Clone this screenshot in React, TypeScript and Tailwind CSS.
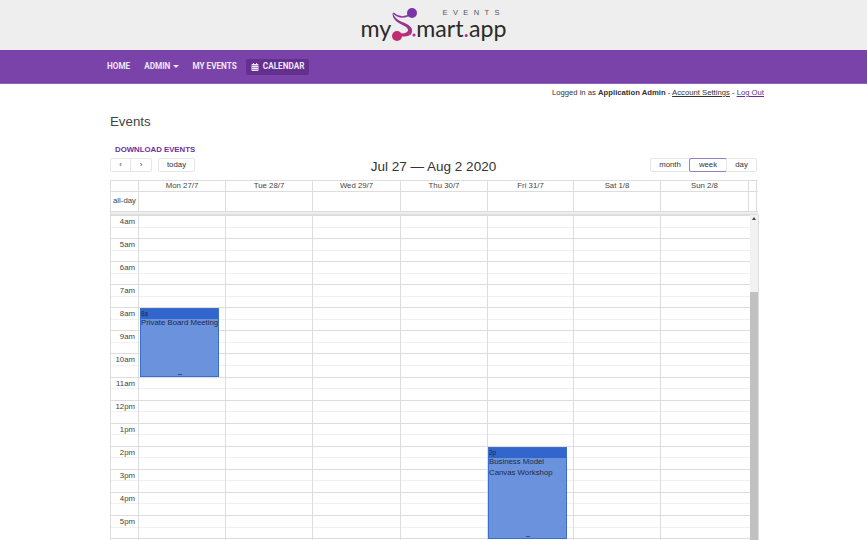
import { FaCalendarAlt } from "react-icons/fa"

const days = ["Mon 27/7", "Tue 28/7", "Wed 29/7", "Thu 30/7", "Fri 31/7", "Sat 1/8", "Sun 2/8"]
const hours = ["4am", "5am", "6am", "7am", "8am", "9am", "10am", "11am", "12pm", "1pm", "2pm", "3pm", "4pm", "5pm", ""]
const dayWidths = ["w-[87px]", "w-[87px]", "w-[88px]", "w-[87px]", "w-[86px]", "w-[87px]", "w-[88px]"]

function Logo() {
  return (
    <div className="relative flex h-[50px] w-[146px] items-start font-['Lato',sans-serif] text-[23.2px] leading-none text-[#2b2b2b]">
      <span className="mt-[17px]">my</span>
      <svg width="28" height="36" viewBox="0 0 28 36" className="ml-[-1px] mt-[5px] shrink-0">
        <defs>
          <linearGradient id="logoBand" x1="0" y1="0" x2="0" y2="1">
            <stop offset="0" stopColor="#7a35a8" />
            <stop offset="1" stopColor="#bb2f78" />
          </linearGradient>
        </defs>
        <path d="M3 8 C4 12 7 15 12 17 C18 19 23 22 22 27 C21 32 14 32 7 31 L7 28 C13 29 18 28 18 25 C18 21 10 20 6 16 C3 13 2 10 3 8 Z" fill="url(#logoBand)" />
        <path d="M3 8 C9 13 16 13 22 8" fill="none" stroke="#8a3aa4" strokeWidth="1.6" />
        <circle cx="22" cy="8" r="5" fill="#7a35a8" />
        <circle cx="7" cy="31" r="5" fill="#c02c70" />
        <circle cx="24" cy="30" r="1.6" fill="#a03a8a" />
      </svg>
      <span className="ml-[-2px] mt-[17px]">
        mart<span className="text-[#c2277a]">.</span>app
      </span>
      <span className="absolute left-[82px] top-[9px] font-['Liberation_Sans',sans-serif] text-[7.5px] leading-[8px] tracking-[0.72em] text-[#555]">EVENTS</span>
    </div>
  )
}

function Event({ time, title, className }: { time: string; title: string; className: string }) {
  return (
    <div className={`absolute right-[6px] border border-[#3a6fd0] bg-[#6b92dc] text-[7.8px] leading-[11px] text-[#1f2a44] ${className}`}>
      <div className="h-[10px] bg-[#3366cc] text-[6.5px] leading-[10px]">{time}</div>
      <div className="mt-[-2px]">{title}</div>
      <div className="absolute bottom-[1px] left-0 right-0 mx-auto h-[1.5px] w-[4px] bg-[#2c4f96]" />
    </div>
  )
}

export default function App() {
  return (
    <div className="h-[540px] w-[867px] overflow-hidden bg-white font-['Liberation_Sans',sans-serif] text-[8px] text-[#333]">
      <header className="flex h-[50px] justify-center bg-[#eeeeee]">
        <Logo />
      </header>

      <nav className="flex h-[34px] items-center border-b border-[#9062b8] bg-[#7a43a9] pl-[107px] font-['Roboto',sans-serif] text-[8.2px] font-bold text-[#efe6f6]">
        <span>HOME</span>
        <span className="ml-[14px] flex items-center gap-[3px]">
          ADMIN
          <span className="h-0 w-0 border-x-[3px] border-t-[3px] border-x-transparent border-t-[#efe6f6]" />
        </span>
        <span className="ml-[13px]">MY EVENTS</span>
        <span className="ml-[9px] flex h-[16px] items-center gap-[4px] rounded-[2px] bg-[#63308f] px-[5px]">
          <FaCalendarAlt className="h-[8px] w-[8px]" />
          CALENDAR
        </span>
      </nav>

      <div className="flex h-[17px] items-center justify-end pr-[103px] text-[7.7px] text-[#333]">
        <span>
          Logged in as <b>Application Admin</b> - <span className="underline">Account Settings</span> -{" "}
          <span className="text-[#63308f] underline">Log Out</span>
        </span>
      </div>

      <main className="ml-[110px] w-[648px]">
        <h1 className="mt-[12px] h-[18px] text-[13.3px] leading-[18px] text-[#444]">Events</h1>
        <div className="ml-[5px] mt-[13px] h-[11px] text-[7.8px] font-bold leading-[11px] text-[#6f2f9f]">DOWNLOAD EVENTS</div>

        <div className="mt-[3px] grid h-[22px] grid-cols-3 items-start pr-[1px]">
          <div className="flex text-[7.8px]">
            <button className="h-[14px] w-[21px] rounded-l-[2px] border border-[#e6e6e6] leading-none">‹</button>
            <button className="ml-[-1px] h-[14px] w-[22px] rounded-r-[2px] border border-[#e6e6e6] leading-none">›</button>
            <button className="ml-[6px] h-[14px] w-[37px] rounded-[2px] border border-[#e6e6e6] leading-none">today</button>
          </div>
          <div className="whitespace-nowrap pt-[2px] text-center text-[13.5px] leading-[14px] text-[#333]">Jul 27 — Aug 2 2020</div>
          <div className="flex justify-end text-[7.8px]">
            <button className="h-[14px] w-[40px] rounded-l-[2px] border border-[#e6e6e6] leading-none">month</button>
            <button className="ml-[-1px] h-[14px] w-[38px] rounded-[2px] border border-[#9a7cc0] leading-none">week</button>
            <button className="ml-[-1px] h-[14px] w-[31px] rounded-r-[2px] border border-[#e6e6e6] leading-none">day</button>
          </div>
        </div>

        <div className="border-l border-[#dddddd] text-[7.8px] text-[#444]">
          <div className="flex h-[12px] border-y border-[#dddddd] leading-[10px]">
            <div className="w-[27px] shrink-0" />
            {days.map((d, i) => (
              <div key={d} className={`${dayWidths[i]} shrink-0 border-l border-[#dddddd] text-center`}>
                {d}
              </div>
            ))}
            <div className="w-[9px] border-x border-[#dddddd]" />
          </div>
          <div className="flex h-[19px]">
            <div className="w-[27px] shrink-0 pt-[3px] text-center">all-day</div>
            {days.map((d, i) => (
              <div key={d} className={`${dayWidths[i]} shrink-0 border-l border-[#dddddd]`} />
            ))}
            <div className="w-[9px] border-x border-[#dddddd]" />
          </div>
          <div className="h-[4px] border-y border-[#dddddd] bg-[#eeeeee]" />

          <div className="flex">
            <div className="w-[639px] shrink-0 border-t border-[#dddddd]">
              <div className="relative">
                {hours.map((h, idx) => (
                  <div key={idx} className="flex h-[23.08px] flex-col border-b border-[#dddddd]">
                    <div className="h-[11.5px] border-b border-[#f0f0f0]">
                      <div className="w-[27px] pr-[3px] pt-[1px] text-right leading-[10px]">{h}</div>
                    </div>
                  </div>
                ))}
                <div className="absolute inset-0 flex">
                  <div className="w-[27px] shrink-0" />
                  {days.map((d, i) => (
                    <div key={d} className={`relative ${dayWidths[i]} shrink-0 border-l border-[#dddddd]`}>
                      {i === 0 && <Event time="8a" title="Private Board Meeting" className="left-[1px] top-[92px] h-[69px] whitespace-nowrap" />}
                      {i === 4 && <Event time="2p" title="Business Model Canvas Workshop" className="left-0 top-[231px] h-[92px]" />}
                    </div>
                  ))}
                </div>
              </div>
            </div>
            <div className="relative h-[326px] w-[8px] shrink-0 bg-[#f1f1f1]">
              <div className="absolute left-[2px] top-[2px] h-0 w-0 border-x-[2px] border-b-[3px] border-x-transparent border-b-[#444]" />
              <div className="absolute bottom-0 left-0 right-0 top-[77px] bg-[#c1c1c1]" />
            </div>
            <div className="h-[326px] border-l border-[#dddddd]" />
          </div>
        </div>
      </main>
    </div>
  )
}
